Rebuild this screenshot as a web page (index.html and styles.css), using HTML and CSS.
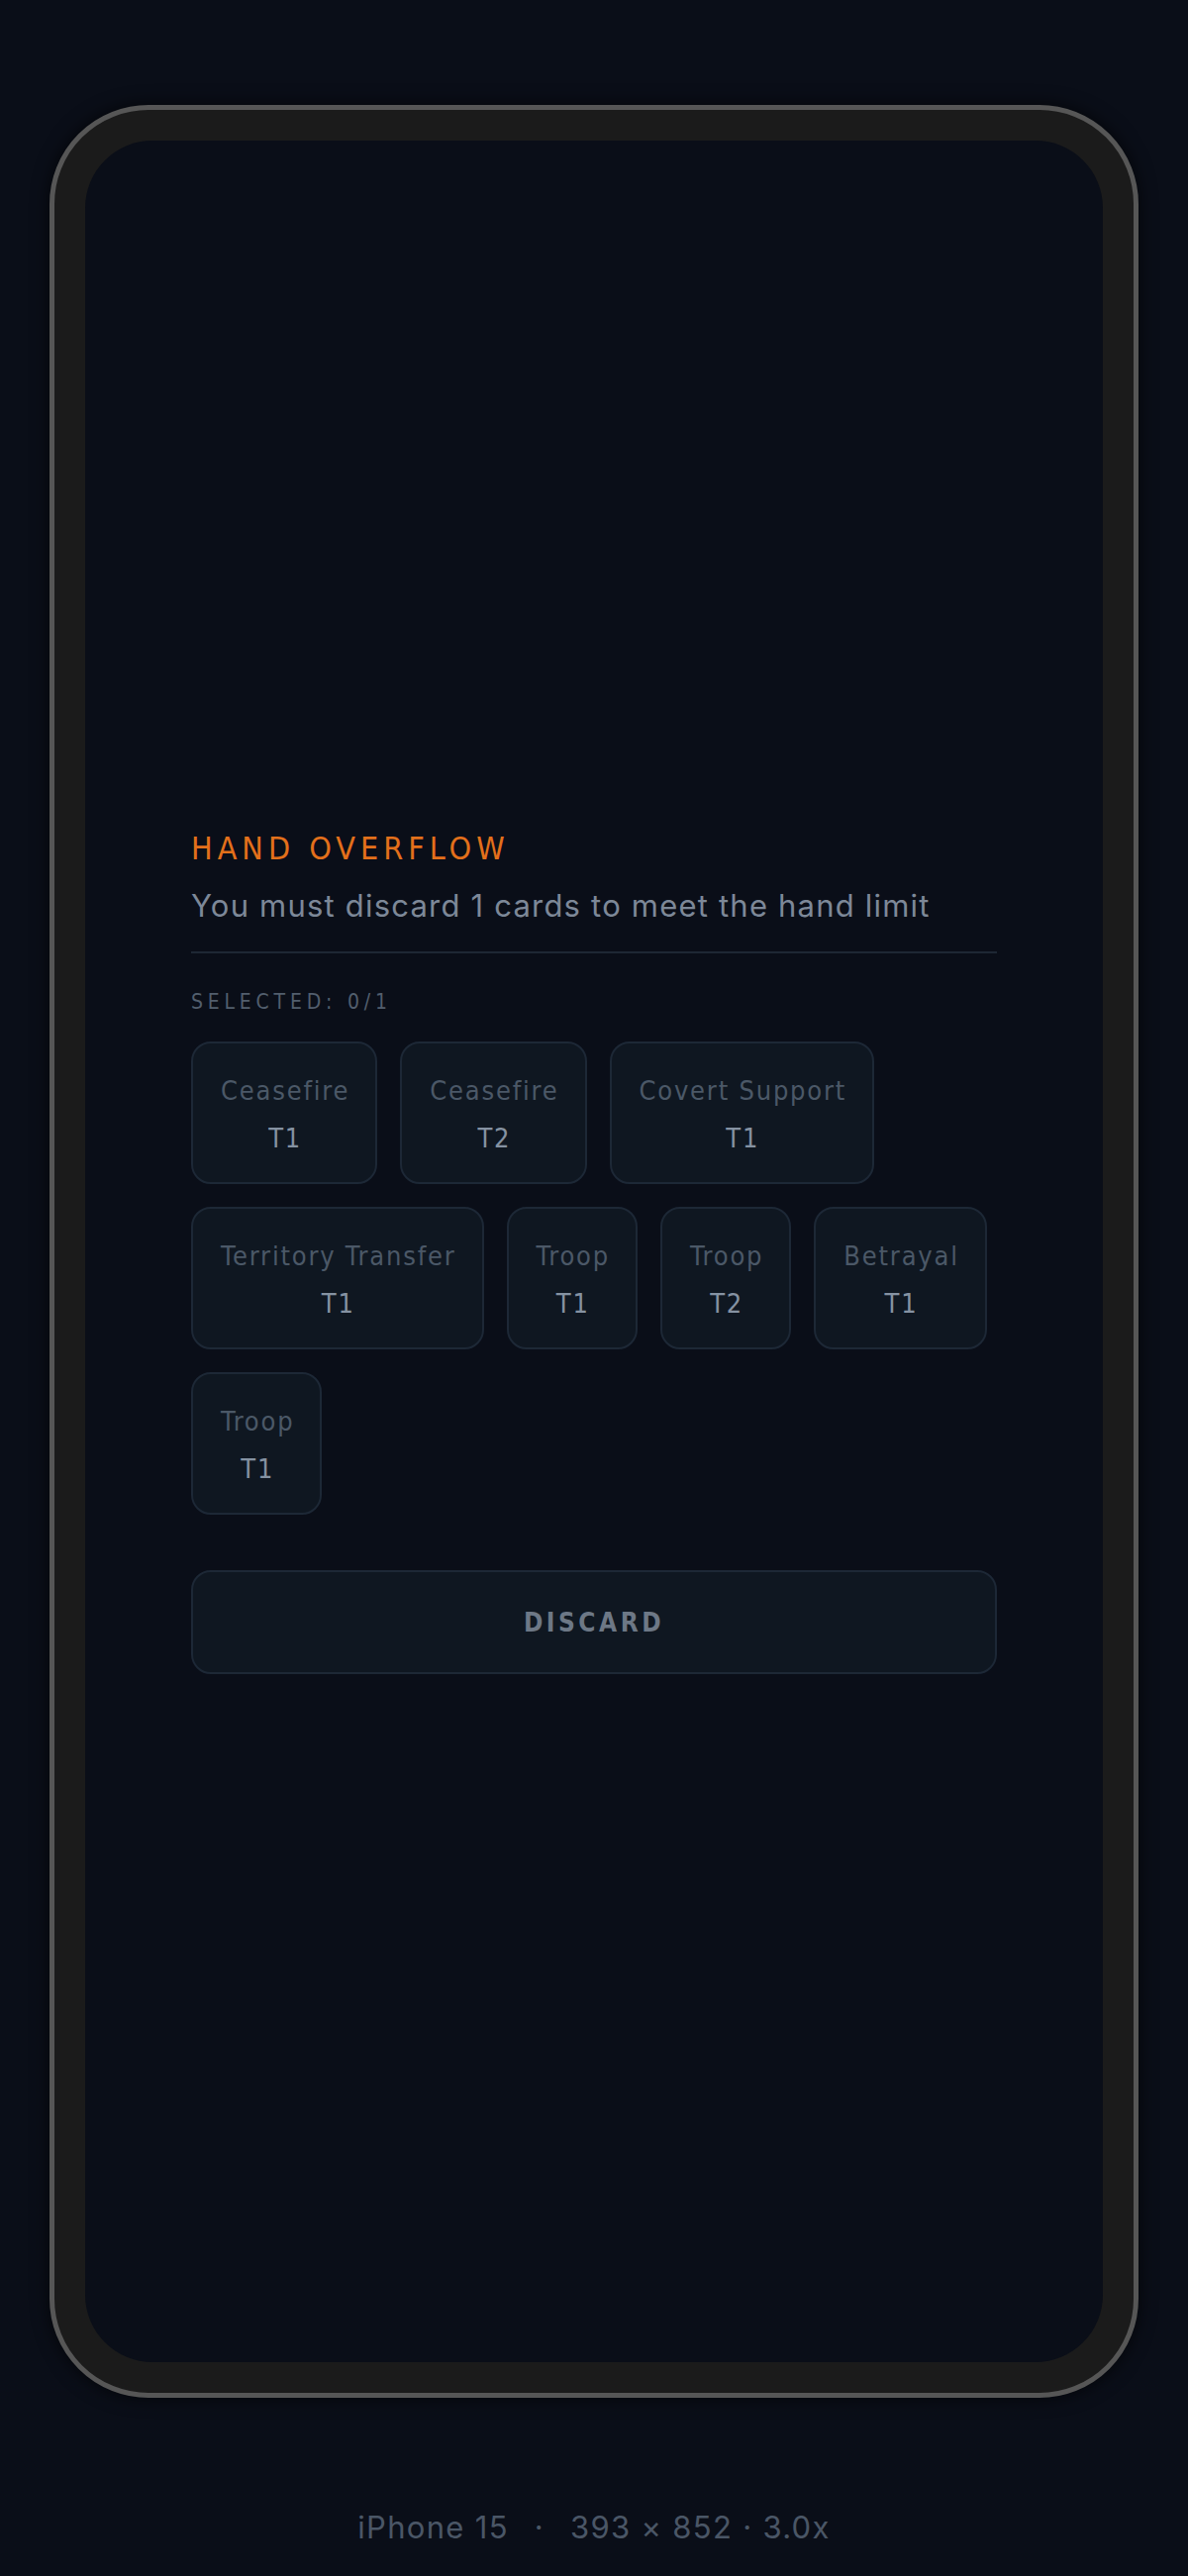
FILE: index.html
```html
<!DOCTYPE html>
<html lang="en">
<head>
<meta charset="utf-8">
<title>Hand Overflow</title>
<link rel="stylesheet" href="styles.css">
</head>
<body>
<div class="stage">
  <div class="phone">
    <div class="screen">
      <div class="panel">
        <h1 class="title">HAND OVERFLOW</h1>
        <p class="subtitle">You must discard 1 cards to meet the hand limit</p>
        <div class="selected">SELECTED: 0/1</div>
        <div class="cards">
          <div class="card"><span class="name">Ceasefire</span><span class="tier">T1</span></div>
          <div class="card"><span class="name">Ceasefire</span><span class="tier">T2</span></div>
          <div class="card"><span class="name">Covert Support</span><span class="tier">T1</span></div>
          <div class="card"><span class="name">Territory Transfer</span><span class="tier">T1</span></div>
          <div class="card"><span class="name">Troop</span><span class="tier">T1</span></div>
          <div class="card"><span class="name">Troop</span><span class="tier">T2</span></div>
          <div class="card"><span class="name">Betrayal</span><span class="tier">T1</span></div>
          <div class="card"><span class="name">Troop</span><span class="tier">T1</span></div>
        </div>
        <button class="discard">DISCARD</button>
      </div>
    </div>
  </div>
  <div class="device-label"><span>iPhone 15</span><span class="sep">·</span><span>393 × 852 · 3.0x</span></div>
</div>
</body>
</html>
```
FILE: styles.css
```css
html, body {
  margin: 0;
  padding: 0;
  background: #0a0e18;
}

.stage {
  display: flex;
  flex-direction: column;
  align-items: center;
  padding-top: 106px;
}

.phone {
  box-sizing: border-box;
  width: 1100px;
  height: 2316px;
  border: 5px solid #565656;
  background: #1b1b1b;
  padding: 31px;
  border-radius: 100px;
  box-shadow: 0 0 18px rgba(0, 0, 0, 0.7);
}

.screen {
  box-sizing: border-box;
  width: 100%;
  height: 100%;
  background: #0a0e18;
  border-radius: 68px;
  display: flex;
  flex-direction: column;
  justify-content: center;
  padding: 0 107px;
}

.panel {
  display: flex;
  flex-direction: column;
}

.title {
  margin: 0;
  font-family: "Liberation Sans Narrow", "DejaVu Sans Condensed", "Liberation Sans", sans-serif;
  font-weight: 400;
  font-size: 32px;
  line-height: 40px;
  letter-spacing: 5px;
  color: #e3701b;
}

.subtitle {
  margin: 18px 0 0;
  padding-bottom: 26px;
  border-bottom: 2px solid #1e2734;
  font-family: Inter, "Liberation Sans", sans-serif;
  font-size: 31px;
  line-height: 40px;
  letter-spacing: 1.2px;
  color: #7d8898;
}

.selected {
  margin-top: 34px;
  font-family: "Liberation Sans Narrow", "DejaVu Sans Condensed", "Liberation Sans", sans-serif;
  font-size: 21px;
  line-height: 30px;
  letter-spacing: 4.8px;
  color: #525e6d;
}

.cards {
  margin-top: 25px;
  display: flex;
  flex-wrap: wrap;
  gap: 23px 23px;
}

.card {
  box-sizing: border-box;
  display: flex;
  flex-direction: column;
  align-items: center;
  gap: 12px;
  padding: 30px 26px 26px 28px;
  background: #0f1721;
  border: 2px solid #1d2836;
  border-radius: 20px;
  font-family: "Liberation Sans Narrow", "DejaVu Sans Condensed", "Liberation Sans", sans-serif;
  font-size: 27px;
  line-height: 36px;
  letter-spacing: 1.8px;
}

.name {
  color: #4b5867;
  white-space: nowrap;
}

.tier {
  color: #8592a2;
}

.discard {
  margin-top: 56px;
  height: 105px;
  background: #0f1721;
  border: 2px solid #1d2836;
  border-radius: 20px;
  font-family: "Liberation Sans Narrow", "DejaVu Sans Condensed", "Liberation Sans", sans-serif;
  font-weight: 700;
  font-size: 26px;
  letter-spacing: 3.5px;
  color: #6d7886;
  padding: 0;
}

.device-label {
  margin-top: 111px;
  font-family: Inter, "Liberation Sans", sans-serif;
  font-size: 31px;
  line-height: 40px;
  letter-spacing: 1.3px;
  color: #4a5666;
  display: flex;
  gap: 26px;
}
```
